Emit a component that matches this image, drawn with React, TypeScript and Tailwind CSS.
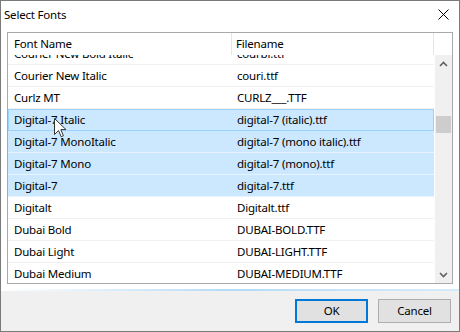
import React from "react";

type Row = { name: string; file: string; sel?: boolean; hover?: boolean };

const rows: Row[] = [
  { name: "Courier New Bold Italic", file: "courbi.ttf" },
  { name: "Courier New Italic", file: "couri.ttf" },
  { name: "Curlz MT", file: "CURLZ___.TTF" },
  { name: "Digital-7 Italic", file: "digital-7 (italic).ttf", sel: true, hover: true },
  { name: "Digital-7 MonoItalic", file: "digital-7 (mono italic).ttf", sel: true },
  { name: "Digital-7 Mono", file: "digital-7 (mono).ttf", sel: true },
  { name: "Digital-7", file: "digital-7.ttf", sel: true },
  { name: "Digitalt", file: "Digitalt.ttf" },
  { name: "Dubai Bold", file: "DUBAI-BOLD.TTF" },
  { name: "Dubai Light", file: "DUBAI-LIGHT.TTF" },
  { name: "Dubai Medium", file: "DUBAI-MEDIUM.TTF" },
];

export default function App() {
  return (
    <div
      className="w-[460px] h-[332px] border border-[#7a7a7a] bg-white flex flex-col text-[11.5px] tracking-[-0.2px] text-black relative overflow-hidden"
      style={{ fontFamily: '"Noto Sans", "Open Sans", sans-serif' }}
    >
      {/* Title bar */}
      <div className="h-[27px] flex items-center justify-between pl-[3px] pr-[10px] shrink-0">
        <span className="leading-none">Select Fonts</span>
        <svg width="11" height="11" viewBox="0 0 11 11" className="mt-[-1px]">
          <path d="M0.5 0.5 L10.5 10.5 M10.5 0.5 L0.5 10.5" stroke="#000" strokeWidth="1" />
        </svg>
      </div>

      {/* Content */}
      <div className="px-[6px] pt-[4px] shrink-0">
        <div className="h-[252px] border border-[#a9a9a9] bg-white flex flex-col">
          {/* Header */}
          <div className="h-[22px] flex shrink-0 relative z-10 bg-white">
            <div className="w-[224px] flex items-center pl-[6px] border-r border-[#e5e5e5]">Font Name</div>
            <div className="w-[202px] flex items-center pl-[4px] border-r border-[#e5e5e5]">Filename</div>
            <div className="flex-1" />
          </div>
          <div className="flex flex-1 min-h-0">
            {/* Rows */}
            <div className="w-[427px] overflow-hidden">
              <div className="mt-[-12px]">
                {rows.map((r) => (
                  <div
                    key={r.name}
                    className={
                      "h-[22px] flex items-center border-b " +
                      (r.sel ? "bg-[#cce8ff] border-[#e8f4ff] " : "border-[#f0f0f0] ") +
                      (r.hover ? "outline outline-1 -outline-offset-1 outline-[#99d1ff] w-[426px]" : "")
                    }
                  >
                    <div className="w-[224px] pl-[6px] whitespace-nowrap">{r.name}</div>
                    <div className="pl-[5px] whitespace-nowrap">{r.file}</div>
                  </div>
                ))}
              </div>
            </div>
            {/* Scrollbar */}
            <div className="w-[17px] ml-[1px] bg-[#f0f0f0] flex flex-col items-center">
              <div className="h-[17px] flex items-center justify-center">
                <svg width="9" height="6" viewBox="0 0 9 6">
                  <path d="M1 5 L4.5 1.5 L8 5" stroke="#606060" strokeWidth="1.6" fill="none" />
                </svg>
              </div>
              <div className="mt-[44px] h-[17px] w-[15px] bg-[#cdcdcd]" />
              <div className="flex-1" />
              <div className="h-[17px] flex items-center justify-center">
                <svg width="9" height="6" viewBox="0 0 9 6">
                  <path d="M1 1 L4.5 4.5 L8 1" stroke="#606060" strokeWidth="1.6" fill="none" />
                </svg>
              </div>
            </div>
          </div>
        </div>
      </div>

      <div className="mt-[5px] h-[2px] bg-gradient-to-r from-transparent via-[#b5dbf7] to-[#d6ebfb] shrink-0" />

      {/* Footer */}
      <div className="flex-1 bg-[#f0f0f0] flex justify-end items-start pt-[8px] pr-[8px] gap-[10px]">
        <button className="w-[73px] h-[24px] bg-[#e1e1e1] border-2 border-[#0078d7] flex items-center justify-center">
          OK
        </button>
        <button className="w-[73px] h-[24px] bg-[#e1e1e1] border border-[#adadad] flex items-center justify-center">
          Cancel
        </button>
      </div>

      {/* Mouse cursor */}
      <svg
        width="13"
        height="21"
        viewBox="0 0 13 21"
        className="absolute left-[53px] top-[117px] pointer-events-none"
      >
        <path
          d="M0.5 0.5 L0.5 16.5 L4.5 12.5 L7.2 18.8 L9.4 17.8 L6.8 11.6 L12 11.6 Z"
          fill="#fff"
          stroke="#333"
          strokeWidth="1"
          strokeLinejoin="round"
        />
      </svg>
    </div>
  );
}
